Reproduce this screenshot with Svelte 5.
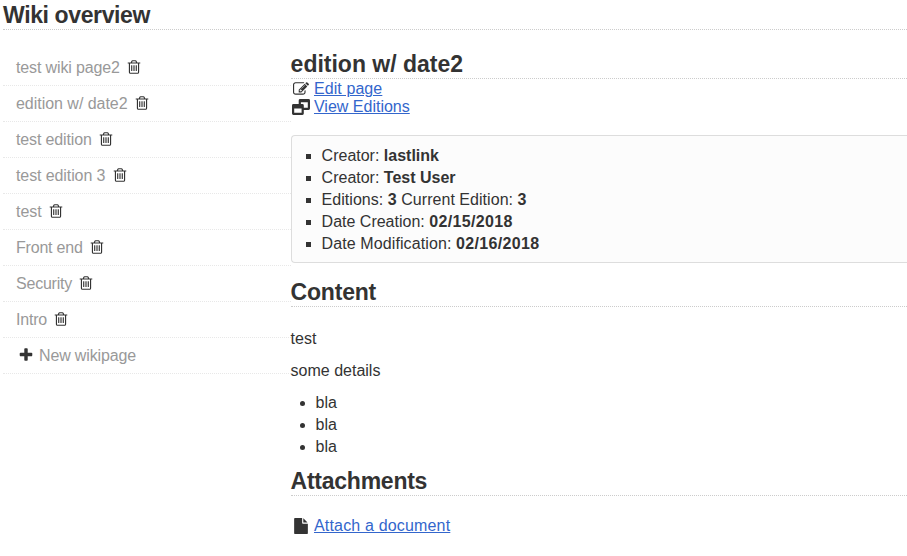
<script>
  const pages = [
    { name: 'test wiki page2', spacing: -0.13 },
    { name: 'edition w/ date2', spacing: -0.03 },
    { name: 'test edition', spacing: -0.13 },
    { name: 'test edition 3', spacing: -0.1 },
    { name: 'test', spacing: 0 },
    { name: 'Front end', spacing: -0.2 },
    { name: 'Security', spacing: -0.22 },
    { name: 'Intro', spacing: -0.2 }
  ];
  const notes = ['bla', 'bla', 'bla'];
</script>

<div class="wiki">
  <h2 class="overview">Wiki overview</h2>
  <div class="columns">
    <ul class="sidebar">
      {#each pages as page}
        <li>
          <a href="#page" style="letter-spacing: {page.spacing}px">{page.name}</a>
          <svg class="trash" viewBox="0 0 1792 1792"><path d="M704 736v576q0 14-9 23t-23 9h-64q-14 0-23-9t-9-23v-576q0-14 9-23t23-9h64q14 0 23 9t9 23zm256 0v576q0 14-9 23t-23 9h-64q-14 0-23-9t-9-23v-576q0-14 9-23t23-9h64q14 0 23 9t9 23zm256 0v576q0 14-9 23t-23 9h-64q-14 0-23-9t-9-23v-576q0-14 9-23t23-9h64q14 0 23 9t9 23zm128 724v-948h-896v948q0 22 7 40.500t14.500 27 10.500 8.500h832q3 0 10.500-8.500t14.500-27 7-40.500zm-672-1076h448l-48-117q-7-9-17-11h-317q-10 2-17 11zm928 32v64q0 14-9 23t-23 9h-96v948q0 83-47 143.500t-113 60.500h-832q-66 0-113-58.500t-47-141.500v-952h-96q-14 0-23-9t-9-23v-64q0-14 9-23t23-9h309l70-167q15-37 54-63t79-26h320q40 0 79 26t54 63l70 167h309q14 0 23 9t9 23z" /></svg>
        </li>
      {/each}
      <li>
        <svg class="plus" viewBox="0 0 1792 1792"><path d="M1600 736v192q0 40-28 68t-68 28h-416v416q0 40-28 68t-68 28h-192q-40 0-68-28t-28-68v-416h-416q-40 0-68-28t-28-68v-192q0-40 28-68t68-28h416v-416q0-40 28-68t68-28h192q40 0 68 28t28 68v416h416q40 0 68 28t28 68z" /></svg>
        <a class="new" href="#new">New wikipage</a>
      </li>
    </ul>

    <main>
      <h2 class="title">edition w/ date2</h2>
      <div class="action first">
        <svg class="icon" width="18" height="16" viewBox="-112 0 2016 1792"><path d="M888 1184l116-116-152-152-116 116v56h96v96h56zm440-720q-16-16-33 1l-350 350q-17 17-1 33t33-1l350-350q17-17 1-33zm80 594v190q0 119-84.500 203.500t-203.500 84.500h-832q-119 0-203.500-84.500t-84.500-203.500v-832q0-119 84.500-203.500t203.500-84.500h832q63 0 117 25 15 7 18 23 3 17-9 29l-49 49q-14 14-32 8-23-6-45-6h-832q-66 0-113 47t-47 113v832q0 66 47 113t113 47h832q66 0 113-47t47-113v-126q0-13 9-22l64-64q15-15 35-7t20 29zm-96-738l288 288-672 672h-288v-288zm444 132l-92 92-288-288 92-92q28-28 68-28t68 28l152 152q28 28 28 68t-28 68z" /></svg>
        <a href="#edit">Edit page</a>
      </div>
      <div class="action">
        <svg class="icon" width="18" height="16" viewBox="0 0 18 16"><path fill-rule="evenodd" d="M1.400 5H6.700V1.400Q6.700 0 8.100 0H16.600Q18 0 18 1.400V9.600Q18 11 16.600 11H11.800V14.600Q11.800 16 10.400 16H1.400Q0 16 0 14.600V6.400Q0 5 1.400 5ZM2.200 9.500V13.800H9.600V9.500ZM8.900 5H10.400Q11.800 5 11.800 6.400V8.800H15.800V3.200H8.900Z" /></svg>
        <a href="#editions">View Editions</a>
      </div>

      <ul class="panel">
        <li>Creator: <strong>lastlink</strong></li>
        <li>Creator: <strong>Test User</strong></li>
        <li class="editions">Editions: <strong>3</strong> Current Edition: <strong>3</strong></li>
        <li>Date Creation: <strong class="date">02/15/2018</strong></li>
        <li><span class="modified">Date Modification:</span> <strong class="date">02/16/2018</strong></li>
      </ul>

      <h2 class="content">Content</h2>
      <p>test</p>
      <p>some details</p>
      <ul class="notes">
        {#each notes as note}
          <li>{note}</li>
        {/each}
      </ul>

      <h2 class="attachments">Attachments</h2>
      <div class="action attach">
        <svg class="icon" width="18" height="16" viewBox="-112 0 2016 1792"><path d="M1152 512v-472q22 14 36 28l408 408q14 14 28 36h-472zm-128 32q0 40 28 68t68 28h544v1056q0 40-28 68t-68 28h-1344q-40 0-68-28t-28-68v-1600q0-40 28-68t68-28h800v544z" /></svg>
        <a href="#attach">Attach a document</a>
      </div>
    </main>
  </div>
</div>

<style>
  :global(body) {
    background: #fff;
    overflow: hidden;
  }
  .wiki {
    height: 556px;
    padding-left: 3px;
    overflow: hidden;
    font: 16px/22px "Liberation Sans", Arial, sans-serif;
    color: #333;
  }
  h2 {
    box-sizing: border-box;
    margin: 0;
    height: 29px;
    border-bottom: 1px dotted #ccc;
    font-size: 23px;
    line-height: 28px;
    font-weight: bold;
  }
  .overview {
    height: 30px;
    line-height: 30px;
    letter-spacing: -0.38px;
  }
  ul {
    margin: 0;
    padding: 0;
  }
  svg {
    fill: #333;
    flex: none;
  }
  .columns {
    display: flex;
    padding-top: 20px;
  }
  .sidebar {
    width: 287.6px;
    flex: none;
    list-style: none;
  }
  .sidebar li {
    box-sizing: border-box;
    display: flex;
    align-items: center;
    height: 36px;
    padding-left: 13px;
    border-bottom: 1px dotted #e8e8e8;
  }
  .sidebar a {
    color: #999;
    text-decoration: none;
  }
  .sidebar .new {
    letter-spacing: -0.15px;
  }
  .trash,
  .plus {
    width: 16px;
    height: 16px;
    margin-bottom: 1px;
  }
  .trash {
    margin-left: 6.400px;
  }
  .plus {
    margin-left: 2px;
    margin-right: 5px;
  }
  main {
    flex: 1;
    min-width: 0;
  }
  .action {
    display: flex;
    align-items: center;
    height: 18px;
    line-height: 18px;
  }
  .first {
    margin-top: 1px;
  }
  .first a {
    letter-spacing: 0.08px;
  }
  .icon {
    margin: 0 4.400px 0 1px;
  }
  .action a {
    color: #36c;
    text-decoration: underline;
  }
  .attach a {
    letter-spacing: 0.17px;
  }
  .panel {
    margin-top: 19px;
    padding: 9px 0 7px 30px;
    border: 1px solid #ddd;
    border-right: 0;
    border-radius: 4px 0 0 4px;
    background: #fcfcfc;
    list-style: square;
  }
  .editions {
    letter-spacing: 0.04px;
  }
  .modified {
    letter-spacing: 0.1px;
  }
  .date {
    letter-spacing: 0.34px;
  }
  .content {
    margin: 15px 0 21px;
    letter-spacing: -0.2px;
  }
  p {
    margin: 0 0 10px;
  }
  .notes {
    padding-left: 25px;
  }
  .attachments {
    margin: 9px 0 21px;
    letter-spacing: -0.25px;
  }
</style>
